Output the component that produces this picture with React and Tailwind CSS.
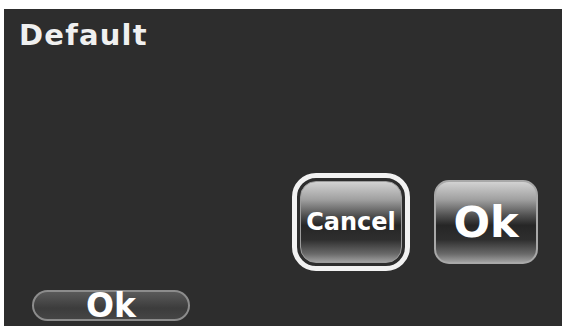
export default function App() {
  const glossy =
    'bg-[linear-gradient(to_bottom,#d2d2d2_0%,#a0a0a0_22%,#505050_42%,#262626_54%,#2e2e2e_72%,#6a6a6a_90%,#a0a0a0_100%)]'

  return (
    <div className="w-[565px] h-[329px] bg-white pl-[4px] pt-[9px]" style={{ fontFamily: '"DejaVu Sans", Verdana, sans-serif' }}>
      <div className="w-[558px] h-[317px] bg-[#2d2d2d] flex flex-col">
        {/* Title */}
        <div className="pl-[15px] pt-[12px] text-[29px] font-bold leading-none text-[#f0f0f0] tracking-[1.2px]">
          Default
        </div>

        {/* Dialog buttons */}
        <div className="flex justify-end items-center gap-[24px] mr-[24px] mt-[123px]">
          <button className="w-[118px] h-[98px] rounded-[24px] border-[5px] border-[#f2f2f2] p-[3px] bg-[#2d2d2d]">
            <div className={`w-full h-full rounded-[16px] border border-[#9c9c9c] ${glossy} flex items-center justify-center`}>
              <span className="text-[24px] font-bold text-white leading-none">Cancel</span>
            </div>
          </button>
          <button className={`w-[104px] h-[84px] rounded-[15px] border-2 border-[#a8a8a8] ${glossy} flex items-center justify-center`}>
            <span className="text-[43px] font-bold text-white leading-none">Ok</span>
          </button>
        </div>

        {/* Bottom pill */}
        <div className="ml-[28px] mt-[19px]">
          <button className="w-[158px] h-[31px] rounded-full border-2 border-[#8c8c8c] bg-[linear-gradient(to_bottom,#5a5a5a,#3c3c3c_60%,#454545)] flex items-center justify-center">
            <span className="text-[33px] font-bold text-white leading-none">Ok</span>
          </button>
        </div>
      </div>
    </div>
  )
}
